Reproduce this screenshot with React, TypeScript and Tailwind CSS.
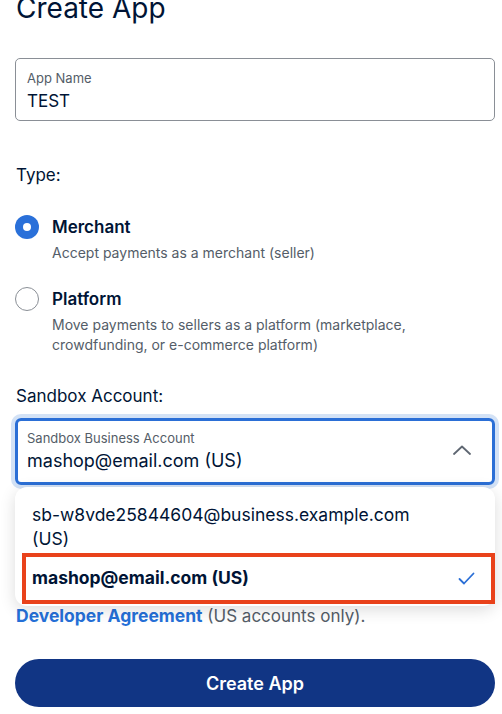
import React from "react";

export default function App() {
  return (
    <div className="relative w-[502px] h-[714px] overflow-hidden bg-white font-['Inter',sans-serif] text-[#001435]">
      <div className="pl-[15px] pr-[7px]">
        <h1 className="mt-[-9px] pl-[1px] text-[28px] leading-[34px] font-normal text-[#001435]">Create App</h1>

        <div className="mt-[33px] h-[63px] rounded-[5px] border border-[#8a8f96] px-[11px] pt-[11px]">
          <div className="text-[13px] leading-[16px] text-[#545d68]">App Name</div>
          <div className="mt-[4px] text-[17px] leading-[22px] text-[#001435]">TEST</div>
        </div>

        <div className="mt-[43px] pl-[1px] text-[17px] leading-[22px] text-[#001435]">Type:</div>

        <div className="mt-[38px] flex gap-[13px]">
          <div className="mt-[-9px] flex h-[24px] w-[24px] shrink-0 items-center justify-center rounded-full bg-[#2a70d9]">
            <div className="h-[8px] w-[8px] rounded-full bg-white" />
          </div>
          <div>
            <div className="mt-[-8px] text-[17px] leading-[22px] font-semibold">Merchant</div>
            <div className="mt-[5px] text-[14px] leading-[20px] text-[#545d68]">Accept payments as a merchant (seller)</div>
          </div>
        </div>

        <div className="mt-[33px] flex gap-[13px]">
          <div className="mt-[-9px] h-[24px] w-[24px] shrink-0 rounded-full border border-[#8a8f96] bg-white" />
          <div>
            <div className="mt-[-8px] text-[17px] leading-[22px] font-semibold">Platform</div>
            <div className="mt-[5px] text-[14px] leading-[20px] text-[#545d68]">
              Move payments to sellers as a platform (marketplace,
              <br />
              crowdfunding, or e-commerce platform)
            </div>
          </div>
        </div>

        <div className="mt-[30px] pl-[1px] text-[17px] leading-[22px] text-[#001435]">Sandbox Account:</div>

        <div className="mt-[11px] flex h-[67px] items-center rounded-[6px] border-[3px] border-[#2b6fd6] pl-[9px] pr-[21px] ring-4 ring-[#d3e2f6]">
          <div className="flex-1">
            <div className="text-[13px] leading-[16px] text-[#545d68]">Sandbox Business Account</div>
            <div className="mt-[3px] text-[18px] leading-[24px] text-[#001435]">mashop@email.com (US)</div>
          </div>
          <svg width="18" height="10" viewBox="0 0 18 10" fill="none" className="mt-[-4px]">
            <path d="M1 9L9 1.5L17 9" stroke="#5f6772" strokeWidth="1.8" strokeLinecap="round" strokeLinejoin="round" />
          </svg>
        </div>

        <div className="mt-[120px] pl-[1px] text-[17px] leading-[22px] text-[#545d68]">
          <span className="text-[17.5px] font-bold text-[#2570d8]">Developer Agreement</span> (US accounts only).
        </div>

        <button className="mt-[32px] flex h-[48px] w-full items-center justify-center rounded-full bg-[#113584] text-[18px] font-semibold text-white">
          Create App
        </button>
      </div>

      <div className="absolute left-[15px] top-[487px] w-[480px] rounded-[12px] bg-white pb-[2px] shadow-[0_4px_16px_rgba(0,0,0,0.14)]">
        <div className="px-[17px] pt-[16px] pb-[2px] text-[17.5px] leading-[24px] text-[#001435]">
          sb-w8vde25844604@business.example.com
          <br />
          (US)
        </div>
        <div className="ml-[7px] flex h-[51px] items-center justify-between border-[4px] border-[#e9421b] pl-[6px] pr-[16px]">
          <span className="text-[17.5px] font-bold text-[#001435]">mashop@email.com (US)</span>
          <svg width="17" height="13" viewBox="0 0 17 13" fill="none">
            <path d="M1.5 7L6 11.5L15.5 1.5" stroke="#2b6fd6" strokeWidth="1.8" strokeLinecap="round" strokeLinejoin="round" />
          </svg>
        </div>
      </div>
    </div>
  );
}
